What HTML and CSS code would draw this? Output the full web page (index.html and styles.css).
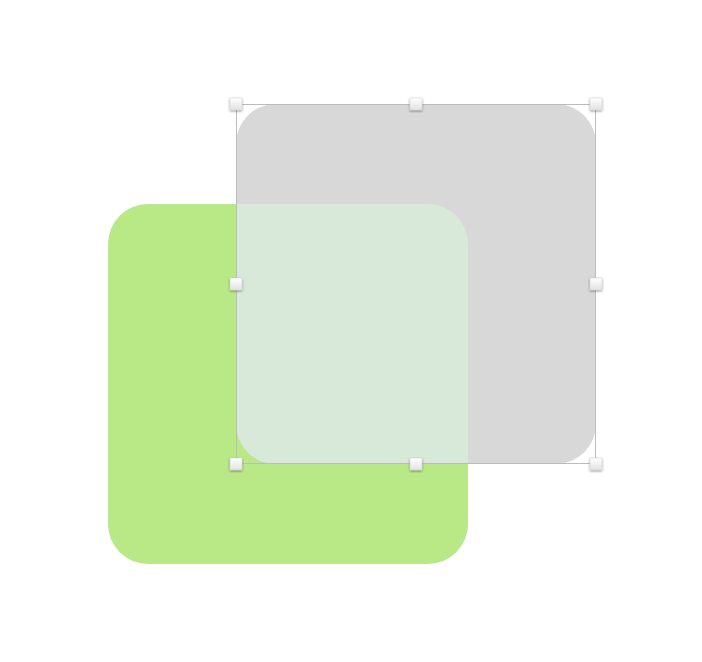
FILE: index.html
```html
<!DOCTYPE html>
<html>
<head>
<meta charset="utf-8">
<link rel="stylesheet" href="styles.css">
</head>
<body>
<main class="canvas">
<svg class="stage" width="702" height="662" viewBox="0 0 702 662" xmlns="http://www.w3.org/2000/svg">
  <defs>
    <clipPath id="greenClip">
      <rect x="108" y="204" width="360" height="360" rx="40" ry="40"/>
    </clipPath>
    <linearGradient id="hg" x1="0" y1="0" x2="0" y2="1">
      <stop offset="0" stop-color="#ffffff"/>
      <stop offset="1" stop-color="#e2e2e2"/>
    </linearGradient>
    <filter id="hs" x="-50%" y="-50%" width="200%" height="200%">
      <feDropShadow dx="0" dy="1" stdDeviation="1.2" flood-color="#000" flood-opacity="0.45"/>
    </filter>
  </defs>
  <rect class="green" x="108" y="204" width="360" height="360" rx="40" ry="40"/>
  <rect class="grey" x="236" y="104" width="360" height="360" rx="40" ry="40"/>
  <rect class="overlap" x="236" y="104" width="360" height="360" rx="40" ry="40" clip-path="url(#greenClip)"/>
  <rect class="bbox" x="236.5" y="104.5" width="359" height="359"/>
  <g class="handles" filter="url(#hs)">
    <rect x="230" y="98" width="12" height="12"/>
    <rect x="410" y="98" width="12" height="12"/>
    <rect x="590" y="98" width="12" height="12"/>
    <rect x="230" y="278" width="12" height="12"/>
    <rect x="590" y="278" width="12" height="12"/>
    <rect x="230" y="458" width="12" height="12"/>
    <rect x="410" y="458" width="12" height="12"/>
    <rect x="590" y="458" width="12" height="12"/>
  </g>
</svg>
</main>
</body>
</html>
```

FILE: styles.css
```css
html, body {
  margin: 0;
  padding: 0;
  background: #ffffff;
  font-family: "Liberation Sans", Arial, sans-serif;
}
.canvas {
  width: 702px;
  height: 662px;
  overflow: hidden;
}
.stage {
  display: block;
}
.green {
  fill: #b9e886;
}
.grey {
  fill: #d8d8d8;
}
.overlap {
  fill: #d8e9d9;
}
.bbox {
  fill: none;
  stroke: #bcbcbc;
  stroke-width: 1;
}
.handles rect {
  fill: url(#hg);
  stroke: #d0d0d0;
  stroke-width: 0.5;
}
```
